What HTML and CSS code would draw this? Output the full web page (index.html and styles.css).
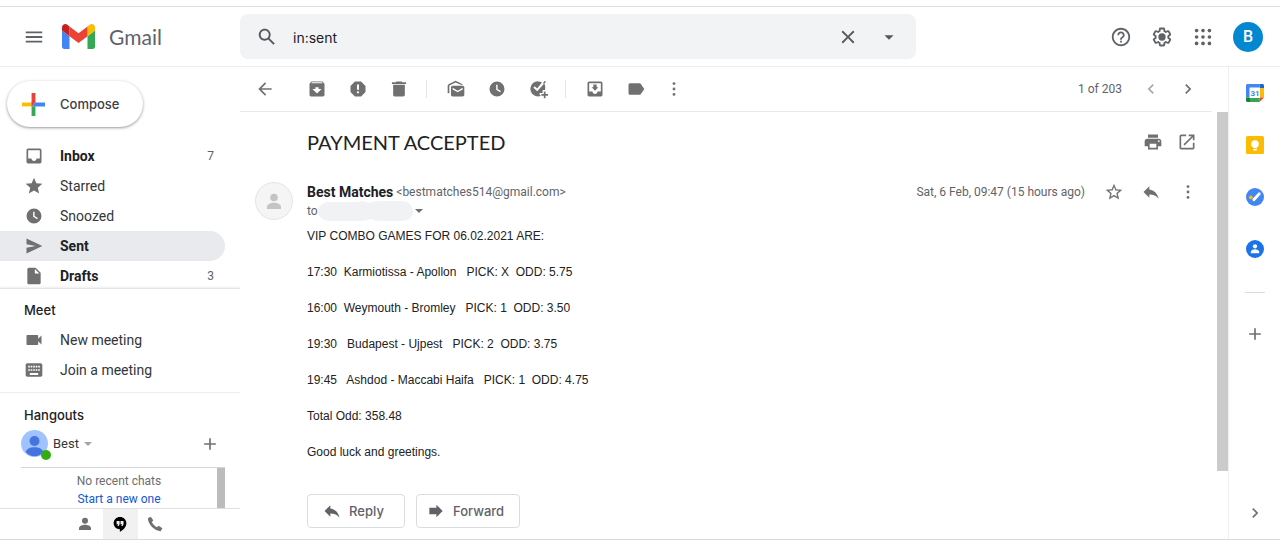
FILE: index.html
```html
<!DOCTYPE html>
<html lang="en">
<head>
<meta charset="utf-8">
<meta name="viewport" content="width=device-width, initial-scale=1">
<title>PAYMENT ACCEPTED - Gmail</title>
<link rel="stylesheet" href="styles.css">
</head>
<body>
<div class="app">
  <header class="header">
    <div class="brand">
      <button class="icon-btn menu-btn" aria-label="Main menu"><svg class="icon-lg" viewBox="0 0 24 24"><path d="M3 18h18v-2H3v2zm0-5h18v-2H3v2zm0-7v2h18V6H3z"/></svg></button>
      <a class="logo" href="#">
        <svg class="logo-mark" viewBox="52 42 88 66" aria-hidden="true"><path fill="#4285f4" d="M58 108h14V74L52 59v43c0 3.32 2.69 6 6 6"/><path fill="#34a853" d="M120 108h14c3.32 0 6-2.69 6-6V59l-20 15"/><path fill="#fbbc04" d="M120 48v26l20-15v-8c0-7.42-8.47-11.65-14.4-7.2"/><path fill="#ea4335" d="M72 74V48l24 18 24-18v26L96 92"/><path fill="#c5221f" d="M52 51v8l20 15V48l-5.6-4.2c-5.94-4.45-14.4-.22-14.4 7.2"/></svg>
        <span>Gmail</span>
      </a>
    </div>
    <form class="search" role="search">
      <button class="icon-btn search-btn" type="button" aria-label="Search mail"><svg class="icon-lg" viewBox="0 0 24 24"><path d="M20.49 19l-5.73-5.73C15.53 12.2 16 10.91 16 9.5 16 5.91 13.09 3 9.5 3S3 5.91 3 9.5 5.91 16 9.5 16c1.41 0 2.7-.47 3.77-1.24L19 20.49 20.49 19zM5 9.5C5 7.01 7.01 5 9.5 5S14 7.01 14 9.5 11.99 14 9.5 14 5 11.99 5 9.5z"/></svg></button>
      <input class="search-input" type="text" value="in:sent" aria-label="Search mail">
      <button class="icon-btn" type="button" aria-label="Clear search"><svg class="icon-lg" viewBox="0 0 24 24"><path d="M19 6.41L17.59 5 12 10.59 6.41 5 5 6.41 10.59 12 5 17.59 6.41 19 12 13.41 17.59 19 19 17.59 13.41 12z"/></svg></button>
      <button class="icon-btn" type="button" aria-label="Show search options"><svg class="icon-lg" viewBox="0 0 24 24"><path d="M7 10l5 5 5-5z"/></svg></button>
    </form>
    <div class="account">
      <button class="icon-btn" aria-label="Support"><svg class="icon-lg" viewBox="0 0 24 24"><path d="M11 18h2v-2h-2v2zm1-16C6.480 2 2 6.480 2 12s4.480 10 10 10 10-4.480 10-10S17.520 2 12 2zm0 18c-4.410 0-8-3.590-8-8s3.590-8 8-8 8 3.590 8 8-3.590 8-8 8zm0-14c-2.210 0-4 1.790-4 4h2c0-1.100.9-2 2-2s2 .9 2 2c0 2-3 1.750-3 5h2c0-2.250 3-2.500 3-5 0-2.210-1.790-4-4-4z"/></svg></button>
      <button class="icon-btn" aria-label="Settings"><svg class="icon-lg" viewBox="0 0 24 24"><path d="M13.850 22.250h-3.700c-.74 0-1.360-.54-1.450-1.270l-.27-1.890c-.27-.14-.53-.29-.79-.46l-1.800.72c-.7.26-1.470-.03-1.810-.65L2.200 15.530c-.35-.66-.2-1.440.36-1.880l1.530-1.190c-.01-.15-.02-.3-.02-.46 0-.15.010-.31.020-.46l-1.520-1.190c-.59-.45-.74-1.260-.37-1.880l1.850-3.190c.34-.62 1.110-.9 1.790-.63l1.810.73c.26-.17.52-.32.78-.46l.27-1.910c.09-.7.710-1.250 1.440-1.250h3.700c.74 0 1.360.54 1.450 1.270l.27 1.890c.27.14.53.29.79.46l1.800-.72c.71-.26 1.480.03 1.820.65l1.840 3.180c.36.66.2 1.440-.36 1.880l-1.520 1.190c.01.15.02.3.02.46s-.01.31-.02.46l1.520 1.190c.56.45.72 1.230.37 1.860l-1.860 3.220c-.34.62-1.110.9-1.800.63l-1.800-.72c-.26.17-.52.32-.78.46l-.27 1.910c-.1.68-.72 1.220-1.460 1.220zm-3.230-2h2.760l.37-2.550.53-.22c.44-.18.88-.44 1.340-.78l.45-.34 2.380.96 1.380-2.400-2.030-1.580.07-.56c.03-.26.06-.51.06-.78s-.03-.53-.06-.78l-.07-.56 2.030-1.580-1.390-2.400-2.390.96-.45-.35c-.42-.32-.87-.58-1.330-.77l-.52-.22-.37-2.550h-2.760l-.37 2.550-.53.21c-.44.19-.88.44-1.340.79l-.45.33-2.380-.95-1.390 2.390 2.030 1.580-.07.56a7 7 0 0 0-.06.790c0 .26.02.53.06.78l.07.56-2.030 1.580 1.380 2.400 2.390-.96.45.35c.43.33.86.58 1.330.77l.53.22z"/><circle cx="12" cy="12" r="4"/></svg></button>
      <button class="icon-btn" aria-label="Google apps"><svg class="icon-lg" viewBox="0 0 24 24"><circle cx="5" cy="5" r="2"/><circle cx="12" cy="5" r="2"/><circle cx="19" cy="5" r="2"/><circle cx="5" cy="12" r="2"/><circle cx="12" cy="12" r="2"/><circle cx="19" cy="12" r="2"/><circle cx="5" cy="19" r="2"/><circle cx="12" cy="19" r="2"/><circle cx="19" cy="19" r="2"/></svg></button>
      <button class="profile" aria-label="Google account">B</button>
    </div>
  </header>

  <aside class="sidebar">
    <div class="compose-wrap">
      <button class="compose">
        <svg class="compose-plus" viewBox="0 0 24 24" aria-hidden="true"><path fill="#ea4335" d="M10 0h4v10l-4 4z"/><path fill="#4285f4" d="M14 10h10v4H10z"/><path fill="#34a853" d="M10 14h4v10h-4z"/><path fill="#fbbc04" d="M0 10h10v4H0z"/><path fill="#ea4335" d="M10 9h4l-4 5z"/></svg>
        Compose
      </button>
    </div>
    <nav class="folders" aria-label="Folders">
      <a class="nav-item unread" href="#"><svg class="icon" viewBox="0 0 24 24"><path d="M19 3H5c-1.100 0-2 .9-2 2v14c0 1.100.9 2 2 2h14c1.100 0 2-.9 2-2V5c0-1.100-.9-2-2-2zm0 12h-4c0 1.660-1.350 3-3 3s-3-1.340-3-3H5V5h14v10z"/></svg><span>Inbox</span><span class="count">7</span></a>
      <a class="nav-item" href="#"><svg class="icon" viewBox="0 0 24 24"><path d="M12 17.270L18.180 21l-1.640-7.030L22 9.240l-7.190-.61L12 2 9.190 8.630 2 9.240l5.460 4.730L5.820 21z"/></svg><span>Starred</span></a>
      <a class="nav-item" href="#"><svg class="icon" viewBox="0 0 24 24"><path d="M12 3a9 9 0 1 0 0 18 9 9 0 0 0 0-18zm3.800 13L11 13V7h1.700v5.100l3.900 2.400z"/></svg><span>Snoozed</span></a>
      <a class="nav-item unread current" href="#" aria-current="page"><svg class="icon" viewBox="0 0 24 24"><path d="M3 21l19-9L3 3v7l11 2-11 2z"/></svg><span>Sent</span></a>
      <a class="nav-item unread" href="#"><svg class="icon" viewBox="0 0 24 24"><path d="M14 2H6c-1.100 0-2 .9-2 2v16c0 1.100.9 2 2 2h12c1.100 0 2-.9 2-2V8zm-1 7V3.500L18.500 9z"/></svg><span>Drafts</span><span class="count">3</span></a>
    </nav>
    <section class="meet">
      <h2 class="side-title">Meet</h2>
      <a class="nav-item" href="#"><svg class="icon" viewBox="0 0 24 24"><path d="M17 10.500V7c0-.6-.4-1-1-1H4c-.6 0-1 .4-1 1v10c0 .6.4 1 1 1h12c.6 0 1-.4 1-1v-3.500l4 4v-11z"/></svg><span>New meeting</span></a>
      <a class="nav-item" href="#"><svg class="icon" viewBox="0 0 24 24"><path d="M20 4H4c-1.100 0-2 .9-2 2v12c0 1.100.9 2 2 2h16c1.100 0 2-.9 2-2V6c0-1.100-.9-2-2-2zm-9 3h2v2h-2zm0 4h2v2h-2zM8 7h2v2H8zm0 4h2v2H8zm-1 2H5v-2h2zm0-4H5V7h2zm10 9H7v-2.500h10zm-1-5h-2v-2h2zm0-4h-2V7h2zm3 4h-2v-2h2zm0-4h-2V7h2z"/></svg><span>Join a meeting</span></a>
    </section>
    <section class="hangouts">
      <h2 class="side-title">Hangouts</h2>
      <div class="chat-user">
        <button class="chat-status">
          <span class="chat-face">
            <svg class="chat-avatar" viewBox="0 0 26 26" aria-hidden="true"><circle cx="13" cy="13" r="13" fill="#a0c3ff"/><circle cx="13" cy="10.500" r="4.800" fill="#4374e0"/><path fill="#4374e0" d="M4.500 21c1-3 4.700-4.400 8.500-4.400s7.500 1.400 8.500 4.400c-2 2.800-5 4.300-8.500 4.300S6.500 23.800 4.500 21z"/></svg>
            <span class="presence"></span>
          </span>
          Best
          <svg class="caret" viewBox="0 0 8 4" aria-hidden="true"><path d="M0 0h8L4 4z"/></svg>
        </button>
        <button class="icon-btn add-chat" aria-label="New conversation"><svg class="icon" viewBox="0 0 24 24"><path d="M19 13h-6v6h-2v-6H5v-2h6V5h2v6h6z"/></svg></button>
      </div>
      <div class="chats">
        <p class="chats-empty">No recent chats<br><a href="#">Start a new one</a></p>
        <span class="chats-bar"></span>
      </div>
    </section>
    <div class="chat-tabs">
      <button class="chat-tab" aria-label="Contacts"><svg class="icon-sm" viewBox="0 0 24 24"><circle cx="12" cy="7.500" r="4"/><path d="M4 20v-2.500c0-3 5-4.500 8-4.500s8 1.500 8 4.500V20z"/></svg></button>
      <button class="chat-tab active" aria-label="Hangouts conversations"><svg class="icon-sm" viewBox="0 0 24 24"><path fill="#000" fill-rule="evenodd" d="M12 2.500c-4.700 0-8.500 3.600-8.500 8.300s3.600 8.200 8.300 8.200V22.500c4.800-2.500 8.700-6.800 8.700-11.500 0-4.900-3.800-8.500-8.500-8.500zM7.500 8h4v4.300l-1.300 2.400H8.500l1-2.400h-2zm5.200 0h4v4.300l-1.300 2.400h-1.700l1-2.400h-2z"/></svg></button>
      <button class="chat-tab" aria-label="Phone calls"><svg class="icon" viewBox="0 0 24 24"><path d="M7 3.300L3.400 5.200C3.600 12.500 11.500 20.500 18.800 20.700l2.100-3.500-4.600-3.200-2 1.900c-2.400-1.200-5-3.800-6.200-6.200L10 7.800z"/></svg></button>
    </div>
  </aside>

  <main class="main">
    <div class="toolbar">
      <button class="icon-btn back" aria-label="Back to Sent"><svg class="icon" viewBox="0 0 24 24"><path d="M20 11H7.800l5.600-5.600L12 4l-8 8 8 8 1.400-1.400L7.800 13H20z"/></svg></button>
      <div class="tool-group">
        <button class="icon-btn" aria-label="Archive"><svg class="icon" viewBox="0 0 24 24"><path d="M20.500 5.200l-1.400-1.700C18.900 3.200 18.500 3 18 3H6c-.5 0-.9.2-1.200.5L3.500 5.200C3.200 5.600 3 6 3 6.500V19c0 1.100.9 2 2 2h14c1.100 0 2-.9 2-2V6.500c0-.5-.2-.9-.5-1.300zM12 17.500L6.500 12H10v-2h4v2h3.500zM5.100 5L6 4h12l.9 1z"/></svg></button>
        <button class="icon-btn" aria-label="Report spam"><svg class="icon" viewBox="0 0 24 24"><path d="M15.700 3H8.300L3 8.300v7.400L8.300 21h7.400l5.300-5.300V8.300zM12 17.300a1.300 1.300 0 1 1 0-2.600 1.300 1.300 0 0 1 0 2.600zm1.200-4.300h-2.400V6.500h2.400z"/></svg></button>
        <button class="icon-btn" aria-label="Delete"><svg class="icon" viewBox="0 0 24 24"><path d="M5 19c0 1.100.9 2 2 2h10c1.100 0 2-.9 2-2V7H5zM20.500 4H16l-1-1H9L8 4H3.500v2h17z"/></svg></button>
      </div>
      <div class="tool-group">
        <button class="icon-btn" aria-label="Mark as unread"><svg class="icon" viewBox="0 0 24 24"><path d="M20 8H8c-1.100 0-2 .9-2 2v9c0 1.100.9 2 2 2h12c1.100 0 2-.9 2-2v-9c0-1.100-.9-2-2-2zm0 4.500l-6 3.500-6-3.500v-2l6 3.500 6-3.500zM4 17H2V8c0-.8.400-1.400 1-1.800L11.500 2l8.500 4.200v.8h-2.200l-6.300-2.900L4 7.800z"/></svg></button>
        <button class="icon-btn" aria-label="Snooze"><svg class="icon" viewBox="0 0 24 24"><path d="M12 3a9 9 0 1 0 0 18 9 9 0 0 0 0-18zm3.800 13L11 13V7h1.700v5.100l3.900 2.400z"/></svg></button>
        <button class="icon-btn" aria-label="Add to tasks"><svg class="icon" viewBox="0 0 24 24"><path d="M15 20.300A9 9 0 1 1 16.800 4.300L11 11.500 8 8.800 6.500 10.400l4.600 4.400 8.300-9.300A9 9 0 0 1 20.500 12v1.200h-3v3.500H14v2.500h1z"/><path d="M21.500 3.500L20.300 2 18 4.700l1.200 1.400zM19 15h2v3h3v2h-3v3h-2v-3h-3v-2h3z"/></svg></button>
      </div>
      <div class="tool-group">
        <button class="icon-btn" aria-label="Move to inbox"><svg class="icon" viewBox="0 0 24 24"><path fill-rule="evenodd" d="M19 3H5c-1.100 0-2 .9-2 2v14c0 1.100.9 2 2 2h14c1.100 0 2-.9 2-2V5c0-1.100-.9-2-2-2zm0 12h-4c0 1.700-1.300 3-3 3s-3-1.300-3-3H5V5h14z"/><path d="M16 10h-2V6.500h-4V10H8l4 4z"/></svg></button>
        <button class="icon-btn" aria-label="Labels"><svg class="icon" viewBox="0 0 24 24"><path d="M17.600 5.800C17.300 5.300 16.700 5 16 5H5c-1.100 0-2 .9-2 2v10c0 1.100.9 2 2 2h11c.7 0 1.300-.3 1.600-.8L22 12z"/></svg></button>
        <button class="icon-btn more" aria-label="More"><svg class="icon" viewBox="0 0 24 24"><circle cx="12" cy="5.500" r="1.700"/><circle cx="12" cy="12" r="1.700"/><circle cx="12" cy="18.500" r="1.700"/></svg></button>
      </div>
      <div class="pager">
        <span class="pager-text">1 of 203</span>
        <button class="icon-btn faded" aria-label="Newer"><svg class="icon" viewBox="0 0 24 24"><path d="M15.400 7.400L14 6l-6 6 6 6 1.400-1.400L10.800 12z"/></svg></button>
        <button class="icon-btn" aria-label="Older"><svg class="icon" viewBox="0 0 24 24"><path d="M10 6L8.600 7.400l4.600 4.600-4.600 4.600L10 18l6-6z"/></svg></button>
      </div>
    </div>

    <div class="reading">
      <article class="message">
        <div class="subject-row">
          <h1 class="subject">PAYMENT ACCEPTED</h1>
          <div class="actions">
            <button class="icon-btn" aria-label="Print all"><svg class="icon" viewBox="0 0 24 24"><path d="M19 8H5c-1.700 0-3 1.300-3 3v6h4v4h12v-4h4v-6c0-1.700-1.300-3-3-3zm-3 11H8v-5h8zm3-7a1 1 0 1 1 0-2 1 1 0 0 1 0 2zM18 3H6v4h12z"/></svg></button>
            <button class="icon-btn" aria-label="In new window"><svg class="icon" viewBox="0 0 24 24"><path d="M19 19H5V5h6V3H5a2 2 0 0 0-2 2v14c0 1.100.9 2 2 2h14c1.100 0 2-.9 2-2v-6h-2zM14 3v2h3.600l-9.800 9.800 1.400 1.400L19 6.400V10h2V3z"/></svg></button>
          </div>
        </div>
        <div class="sender-row">
          <svg class="sender-avatar" viewBox="0 0 38 38" aria-hidden="true"><circle cx="19" cy="19" r="18.500" fill="#f5f5f5" stroke="#e4e4e4"/><circle cx="19" cy="15.500" r="3.800" fill="#c4c4c4"/><path fill="#c4c4c4" d="M12 27v-2c0-2.800 4-4.200 7-4.200s7 1.400 7 4.200v2z"/></svg>
          <div class="sender">
            <div class="from"><strong>Best Matches</strong> <span class="email">&lt;bestmatches514@gmail.com&gt;</span></div>
            <div class="to">to<svg class="redacted" viewBox="0 0 95 20" aria-hidden="true"><path fill="#f1f2f4" d="M11 1h28q6-2 12 1 6-2 12-2h20c15 0 17 20 0 20H63q-6 0-10-2-5 2-12 2H12C-4 20-4 2 11 1z"/></svg><button class="details" aria-label="Show details"><svg class="caret" viewBox="0 0 8 4"><path d="M0 0h8L4 4z"/></svg></button></div>
          </div>
          <div class="meta">
            <time class="date" datetime="2021-02-06T09:47">Sat, 6 Feb, 09:47 (15 hours ago)</time>
            <div class="actions">
              <button class="icon-btn" aria-label="Star"><svg class="icon" viewBox="0 0 24 24"><path d="M22 9.240l-7.190-.62L12 2 9.190 8.630 2 9.240l5.460 4.730L5.820 21 12 17.270 18.180 21l-1.630-7.030zM12 15.400l-3.760 2.270 1-4.280-3.320-2.880 4.380-.38L12 6.100l1.710 4.040 4.380.38-3.320 2.880 1 4.280z"/></svg></button>
              <button class="icon-btn" aria-label="Reply"><svg class="icon" viewBox="0 0 24 24"><path d="M10 9V5l-7 7 7 7v-4.100c5 0 8.500 1.600 11 5.100-1-5-4-10-11-11z"/></svg></button>
              <button class="icon-btn" aria-label="More message options"><svg class="icon" viewBox="0 0 24 24"><circle cx="12" cy="5.500" r="1.700"/><circle cx="12" cy="12" r="1.700"/><circle cx="12" cy="18.500" r="1.700"/></svg></button>
            </div>
          </div>
        </div>
        <div class="body">
          <p>VIP COMBO GAMES FOR 06.02.2021 ARE:</p>
          <p>17:30&nbsp; Karmiotissa - Apollon&nbsp;&nbsp; PICK: X&nbsp; ODD: 5.75</p>
          <p>16:00&nbsp; Weymouth - Bromley&nbsp;&nbsp; PICK: 1&nbsp; ODD: 3.50</p>
          <p>19:30&nbsp;&nbsp; Budapest - Ujpest&nbsp;&nbsp; PICK: 2&nbsp; ODD: 3.75</p>
          <p>19:45&nbsp;&nbsp; Ashdod - Maccabi Haifa&nbsp;&nbsp; PICK: 1&nbsp; ODD: 4.75</p>
          <p>Total Odd: 358.48</p>
          <p>Good luck and greetings.</p>
        </div>
        <div class="replies">
          <button class="reply-btn"><svg class="icon" viewBox="0 0 24 24"><path d="M10 9V5l-7 7 7 7v-4.100c5 0 8.500 1.600 11 5.100-1-5-4-10-11-11z"/></svg>Reply</button>
          <button class="reply-btn"><svg class="icon" viewBox="0 0 24 24"><path d="M12.500 8V4.500L20 12l-7.500 7.500V16H4V8z"/></svg>Forward</button>
        </div>
      </article>
      <div class="scroll-track"><span class="scroll-thumb"></span></div>
    </div>
  </main>

  <aside class="addons" aria-label="Side panel">
    <button class="addon" aria-label="Calendar"><svg class="addon-icon" viewBox="0 0 18 18"><path fill="#4285f4" d="M1.500 0h12v4H4v9.500H0v-12C0 .7.7 0 1.500 0z"/><path fill="#1967d2" d="M13.500 0h3c.8 0 1.500.7 1.500 1.500V4h-4.500z"/><path fill="#fbbc04" d="M13.500 4H18v9.500h-4.500z"/><path fill="#34a853" d="M4 13.500h9.500V18H4z"/><path fill="#188038" d="M0 13.500h4V18H1.500C.7 18 0 17.300 0 16.500z"/><path fill="#ea4335" d="M13.500 13.500H18L13.500 18z"/><path fill="#fff" d="M3.500 3.500H14V14H3.500z"/><text class="cal-day" x="9" y="12" text-anchor="middle">31</text></svg></button>
    <button class="addon" aria-label="Keep"><svg class="addon-icon" viewBox="0 0 18 18"><rect width="18" height="18" rx="1.500" fill="#fbbc04"/><circle cx="9" cy="8" r="3.800" fill="#fff"/><path fill="#fff" d="M7.200 10h3.600v2.300H7.200zM7.200 13h3.600v1.500H7.200z"/></svg></button>
    <button class="addon" aria-label="Tasks"><svg class="addon-icon" viewBox="0 0 18 18"><circle cx="9" cy="9" r="9" fill="#4285f4"/><path stroke="#fff" stroke-width="2.800" stroke-linecap="round" d="M7.800 11.800l5.500-6"/><circle cx="4.800" cy="9.300" r="1.900" fill="#fbbc04"/></svg></button>
    <button class="addon" aria-label="Contacts"><svg class="addon-icon" viewBox="0 0 18 18"><circle cx="9" cy="9" r="9" fill="#1a73e8"/><circle cx="9" cy="6.300" r="2.100" fill="#fff"/><path fill="#fff" d="M4.800 13.300v-1.500c0-1.700 2.400-2.600 4.200-2.600s4.200.9 4.200 2.600v1.500z"/></svg></button>
    <hr class="addon-rule">
    <button class="addon plus" aria-label="Get add-ons"><svg class="icon" viewBox="0 0 24 24"><path d="M19 13h-6v6h-2v-6H5v-2h6V5h2v6h6z"/></svg></button>
    <button class="addon hide" aria-label="Hide side panel"><svg class="icon" viewBox="0 0 24 24"><path d="M10 6L8.600 7.400l4.600 4.600-4.600 4.600L10 18l6-6z"/></svg></button>
  </aside>
</div>
</body>
</html>
```

FILE: styles.css
```css
* { box-sizing: border-box; }

body {
  margin: 0;
  padding: 6px 0 3px;
  height: 100vh;
  background: #fff;
  color: #202124;
  font-family: Roboto, "Liberation Sans", sans-serif;
  font-size: 14px;
}

h1, h2, p { margin: 0; font-weight: 400; }
a { color: inherit; text-decoration: none; }
svg { display: block; flex: none; fill: currentColor; }

button {
  display: flex;
  align-items: center;
  justify-content: center;
  padding: 0;
  border: 0;
  background: none;
  color: #707070;
  font: inherit;
  cursor: pointer;
}

.app {
  display: grid;
  grid-template: auto minmax(0, 1fr) / 240px minmax(0, 1fr) 52px;
  height: 100%;
  border-top: 1px solid #dcdede;
  border-bottom: 1px solid #dadcdc;
}

.icon-sm { width: 18px; height: 18px; }
.icon { width: 20px; height: 20px; }
.icon-lg { width: 22px; height: 22px; }
.icon-btn { width: 41px; height: 40px; flex: none; }

/* Header */
.header {
  grid-column: 1 / -1;
  display: flex;
  align-items: center;
  height: 60px;
  border-bottom: 1px solid #eceff0;
}
.brand { display: flex; align-items: center; width: 240px; flex: none; padding-left: 13px; }
.menu-btn { color: #5f6368; }
.logo {
  display: flex;
  align-items: center;
  gap: 14px;
  padding-left: 8px;
  color: #5f6368;
  font-family: Lato, Roboto, sans-serif;
  font-size: 21px;
}
.logo-mark { width: 33px; height: 25px; }
.search {
  display: flex;
  align-items: center;
  flex: 1 1 auto;
  max-width: 676px;
  height: 45px;
  padding: 0 7px 0 6px;
  border-radius: 8px;
  background: #f1f3f4;
}
.search .icon-btn { color: #54585d; }
.search-input {
  flex: 1;
  min-width: 0;
  padding: 2px 6px 0;
  border: 0;
  outline: 0;
  background: none;
  color: #202124;
  font: 14px Inter, Roboto, sans-serif;
}
.account { display: flex; align-items: center; margin-left: auto; padding: 0 17px 0 16px; }
.account .icon-btn { color: #5f6368; }
.profile {
  width: 30px;
  height: 30px;
  margin-left: 10px;
  border-radius: 50%;
  background: #0288d1;
  color: #fff;
  font-size: 16px;
  font-weight: 500;
}

/* Sidebar */
.sidebar { display: flex; flex-direction: column; min-height: 0; }
.compose-wrap { flex: none; padding: 14px 7px; }
.compose {
  gap: 15px;
  height: 46px;
  padding: 0 24px 0 15px;
  border-radius: 23px;
  box-shadow: 0 1px 2px rgba(60, 64, 67, .35), 0 1px 3px 1px rgba(60, 64, 67, .15);
  color: #3c4043;
  font: 500 13px Inter, Roboto, sans-serif;
}
.compose-plus { width: 23px; height: 23px; }
.folders { flex: 1 1 0; min-height: 0; overflow: hidden; }
.nav-item {
  display: flex;
  align-items: center;
  gap: 16px;
  height: 30px;
  margin-right: 15px;
  padding: 0 11px 0 24px;
  border-radius: 0 15px 15px 0;
  color: #333639;
}
.nav-item .icon { color: #707070; }
.unread { color: #202124; font-weight: 700; }
.current { background: #e8eaed; }
.count { margin-left: auto; color: #5f6368; font-size: 12px; font-weight: 400; }
.side-title {
  padding-left: 24px;
  color: #202124;
  font: 500 13px/20px Inter, Roboto, sans-serif;
}
.meet {
  flex: none;
  padding: 11px 0 7px;
  border-top: 1px solid #e4e4e4;
  box-shadow: 0 -1px 2px #eee;
  clip-path: inset(-4px 0 0 0);
}
.meet .side-title { margin-bottom: 5px; }
.hangouts { flex: none; padding-top: 12px; border-top: 1px solid #eceff0; }
.chat-user {
  display: flex;
  align-items: center;
  justify-content: space-between;
  height: 37px;
  margin: 0 15px 5px 21px;
}
.chat-status { gap: 5px; color: #333639; font-size: 13px; }
.chat-status .caret { color: #a5a5a5; }
.chat-face { position: relative; }
.chat-avatar { width: 27px; height: 27px; }
.presence {
  position: absolute;
  right: -3px;
  bottom: -3px;
  width: 10px;
  height: 10px;
  border-radius: 50%;
  background: #33ac13;
}
.caret { width: 8px; height: 4px; }
.add-chat { width: 30px; }
.chats {
  display: flex;
  height: 41px;
  margin: 0 15px 0 21px;
  border-top: 1px solid #d5d5d5;
}
.chats-empty {
  flex: 1;
  padding-top: 4px;
  color: #6d6d6d;
  font-size: 12px;
  line-height: 18px;
  text-align: center;
}
.chats-empty a { color: #1558d6; }
.chats-bar { width: 8px; background: #bcbcbc; }
.chat-tabs {
  display: flex;
  flex: none;
  justify-content: center;
  height: 31px;
  border-top: 1px solid #e0e0e0;
}
.chat-tab { width: 35px; }
.chat-tab.active { background: #f1f1f1; }

/* Toolbar */
.main { display: flex; flex-direction: column; min-width: 0; min-height: 0; }
.toolbar {
  display: flex;
  align-items: center;
  flex: none;
  height: 45px;
  margin-right: 16px;
  padding-left: 4px;
  border-bottom: 1px solid #e9ebeb;
}
.back { margin-right: 11px; }
.tool-group { display: flex; align-items: center; }
.tool-group + .tool-group { margin-left: 7px; }
.tool-group + .tool-group::before { content: ""; width: 1px; height: 18px; margin-right: 8px; background: #e4e4e4; }
.more { width: 35px; }
.pager { display: flex; align-items: center; margin-left: auto; padding-right: 6px; }
.pager .icon-btn { width: 37px; }
.pager-text { padding-right: 10px; color: #5f6368; font-size: 12px; }
.faded { opacity: .6; }

/* Message */
.reading { display: flex; flex: 1; min-height: 0; }
.message { flex: 1; min-width: 0; padding: 10px 11px 0 67px; }
.scroll-track { width: 11px; flex: none; }
.scroll-thumb { display: block; height: 84%; background: #cbcbcb; }
.actions { display: flex; }
.actions .icon-btn { width: 37px; }
.subject-row { display: flex; align-items: center; justify-content: space-between; padding-right: 2px; }
.subject { font: 20px Lato, Roboto, sans-serif; }
.subject-row .actions .icon-btn { width: 34px; }
.sender-row { display: flex; margin: 10px 0 0 -52px; }
.sender-avatar { width: 38px; height: 38px; margin: 10px 14px 0 0; }
.sender { flex: 1; min-width: 0; padding-top: 10px; }
.from, .to { display: flex; align-items: center; height: 19px; }
.from { gap: 3px; }
.email, .to, .date { color: #5f6368; font-size: 12px; }
.redacted { width: 95px; height: 20px; }
.details { padding: 2px; }
.meta { display: flex; align-items: center; height: 40px; }
.date { padding-right: 10px; }
.body {
  display: grid;
  gap: 18px;
  padding-top: 7px;
  color: #222;
  font: 12px/18px "Liberation Sans", Arial, sans-serif;
}
.replies { display: flex; gap: 11px; margin-top: 33px; }
.reply-btn {
  gap: 7px;
  min-width: 98px;
  height: 34px;
  padding: 0 15px 0 9px;
  border: 1px solid #dadce0;
  border-radius: 4px;
  color: #5f6368;
  font: 500 13px Inter, Roboto, sans-serif;
}

/* Side panel */
.addons { display: flex; flex-direction: column; align-items: center; border-left: 1px solid #eef0f0; }
.addon { width: 100%; height: 52px; flex: none; }
.addon-icon { width: 18px; height: 18px; }
.cal-day { fill: #4285f4; font-size: 8px; font-weight: 700; }
.addon-rule { width: 20px; margin: 17px 0 15px; border: 0; border-top: 1px solid #dcdcdc; }
.addon.hide { margin-top: auto; }
```
